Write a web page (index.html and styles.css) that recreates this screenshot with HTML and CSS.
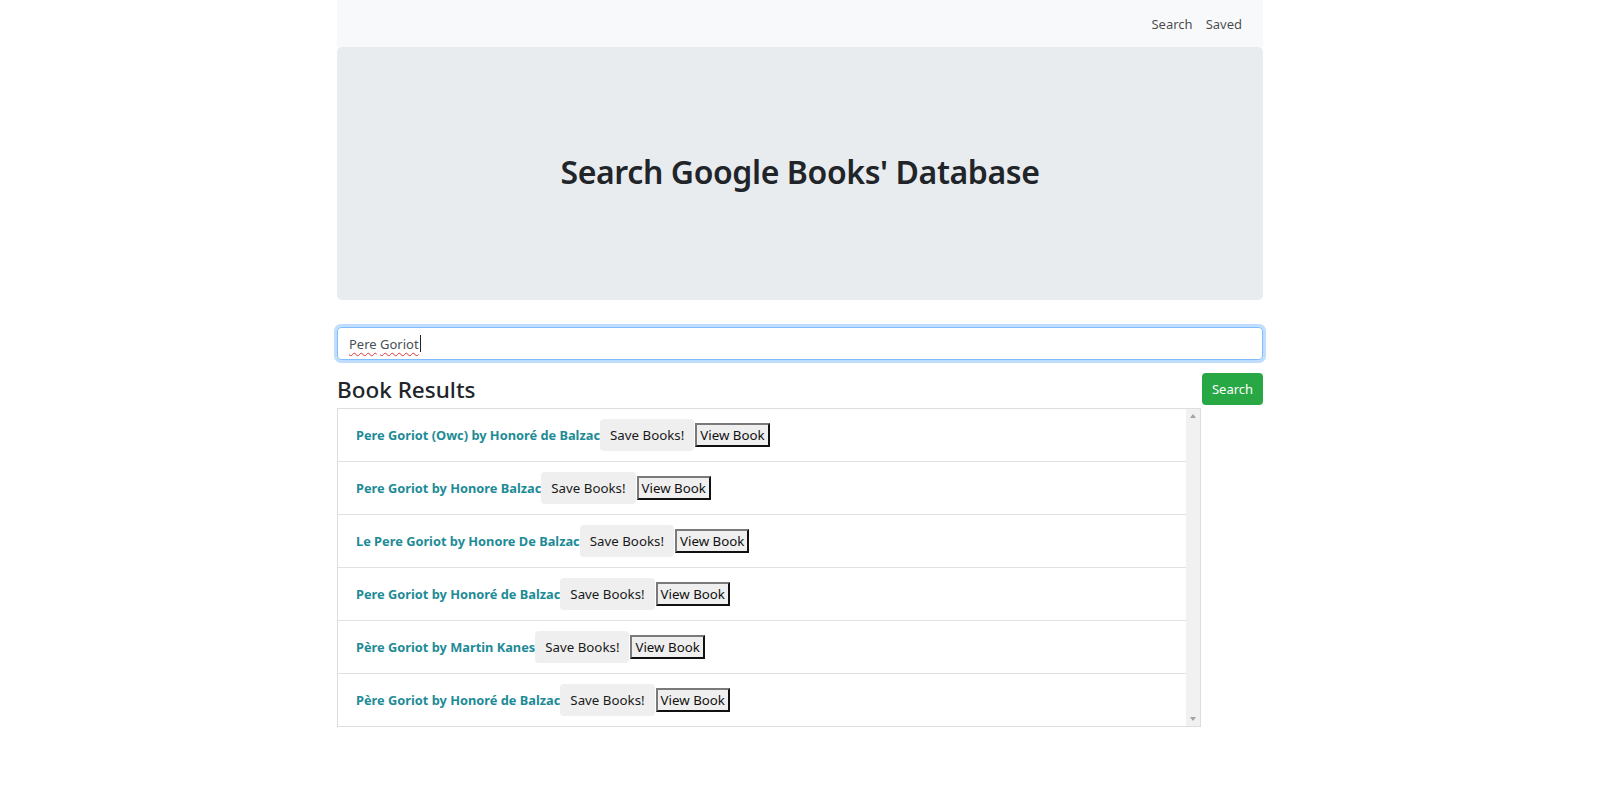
FILE: index.html
```html
<!DOCTYPE html>
<html lang="en">
<head>
<meta charset="utf-8">
<title>Google Books Search</title>
<link rel="stylesheet" href="styles.css">
</head>
<body>
<div class="container">
  <nav class="navbar">
    <a class="nav-link" href="#">Search</a>
    <a class="nav-link" href="#">Saved</a>
  </nav>
  <header class="jumbotron">
    <h1 class="jumbo-title">Search Google Books' Database</h1>
  </header>
  <div class="search-input"><span class="input-text"><span class="misspelled">Pere</span> <span class="misspelled">Goriot</span></span><span class="caret"></span></div>
  <div class="results">
    <div class="results-main">
      <h3 class="results-title">Book Results</h3>
      <div class="list-box">
        <ul class="rows">
          <li class="row"><span class="book">Pere Goriot (Owc) by Honoré de Balzac</span><button class="btn-save">Save Books!</button><button class="btn-view">View Book</button></li>
          <li class="row"><span class="book">Pere Goriot by Honore Balzac</span><button class="btn-save">Save Books!</button><button class="btn-view">View Book</button></li>
          <li class="row"><span class="book">Le Pere Goriot by Honore De Balzac</span><button class="btn-save">Save Books!</button><button class="btn-view">View Book</button></li>
          <li class="row"><span class="book">Pere Goriot by Honoré de Balzac</span><button class="btn-save">Save Books!</button><button class="btn-view">View Book</button></li>
          <li class="row"><span class="book">Père Goriot by Martin Kanes</span><button class="btn-save">Save Books!</button><button class="btn-view">View Book</button></li>
          <li class="row"><span class="book">Père Goriot by Honoré de Balzac</span><button class="btn-save">Save Books!</button><button class="btn-view">View Book</button></li>
        </ul>
        <div class="scrollbar">
          <span class="arrow arrow-up"></span>
          <span class="arrow arrow-down"></span>
        </div>
      </div>
    </div>
    <button class="btn-search">Search</button>
  </div>
</div>
</body>
</html>
```

FILE: styles.css
```css
html, body {
  margin: 0;
  padding: 0;
  background: #ffffff;
}

body {
  font-family: "Noto Sans", "Open Sans", sans-serif;
  color: #212529;
}

.container {
  width: 926px;
  margin: 0 auto;
}

.navbar {
  height: 47px;
  background: #f8f9fa;
  display: flex;
  justify-content: flex-end;
  align-items: center;
  gap: 13px;
  padding-right: 21px;
  box-sizing: border-box;
}

.nav-link {
  font-size: 13px;
  color: rgba(0, 0, 0, 0.72);
  text-decoration: none;
}

.jumbotron {
  height: 253px;
  background: #e9ecef;
  border-radius: 5px;
  display: flex;
  align-items: center;
  justify-content: center;
}

.jumbo-title {
  margin: 0;
  font-size: 32px;
  font-weight: 600;
  letter-spacing: -0.4px;
  color: #212529;
  padding-bottom: 4px;
}

.search-input {
  margin-top: 27px;
  height: 33px;
  box-sizing: border-box;
  border: 1px solid #80bdff;
  border-radius: 4px;
  box-shadow: 0 0 0 3px rgba(0, 123, 255, 0.25);
  padding: 0 11px;
  display: flex;
  align-items: center;
  font-size: 13px;
  color: #495057;
}

.input-text {
  white-space: pre;
}

.misspelled {
  text-decoration: underline wavy #e03030;
  text-decoration-thickness: 1px;
  text-underline-offset: 3px;
}

.caret {
  display: inline-block;
  width: 1px;
  height: 17px;
  background: #222;
  margin-left: 1px;
}

.results {
  margin-top: 13px;
  display: flex;
  align-items: flex-start;
  gap: 1px;
}

.results-main {
  flex: 1;
}

.results-title {
  margin: 0;
  height: 35px;
  line-height: 33px;
  font-size: 22.5px;
  font-weight: 500;
  color: #212529;
}

.list-box {
  height: 319px;
  box-sizing: border-box;
  border: 1px solid #dedede;
  display: flex;
}

.rows {
  flex: 1;
  list-style: none;
  margin: 0;
  padding: 0;
}

.row {
  height: 52px;
  border-bottom: 1px solid #e2e2e2;
  display: flex;
  align-items: center;
  padding-left: 18px;
}

.row:last-child {
  border-bottom: none;
}

.book {
  font-size: 12.8px;
  font-weight: 700;
  color: #1d8b96;
}

.btn-save {
  height: 32px;
  padding: 0 10px;
  border: none;
  border-radius: 4px;
  background: #efefef;
  font-family: inherit;
  font-size: 13.3px;
  color: #1a1a1a;
}

.btn-view {
  height: 24px;
  padding: 0 3px;
  margin-left: 1px;
  border: 2px solid;
  border-color: #7a7a7a #111 #111 #7a7a7a;
  background: #efefef;
  font-family: inherit;
  font-size: 13.3px;
  color: #111;
}

.scrollbar {
  width: 14px;
  background: #f1f1f1;
  display: flex;
  flex-direction: column;
  justify-content: space-between;
  align-items: center;
  padding: 5px 0;
}

.arrow {
  width: 0;
  height: 0;
  border-left: 3.5px solid transparent;
  border-right: 3.5px solid transparent;
}

.arrow-up {
  border-bottom: 4px solid #a3a3a3;
}

.arrow-down {
  border-top: 4px solid #a3a3a3;
}

.btn-search {
  margin-top: 0;
  width: 61px;
  height: 32px;
  border: none;
  border-radius: 4px;
  background: #28a745;
  color: #ffffff;
  font-family: inherit;
  font-size: 13px;
}
```
